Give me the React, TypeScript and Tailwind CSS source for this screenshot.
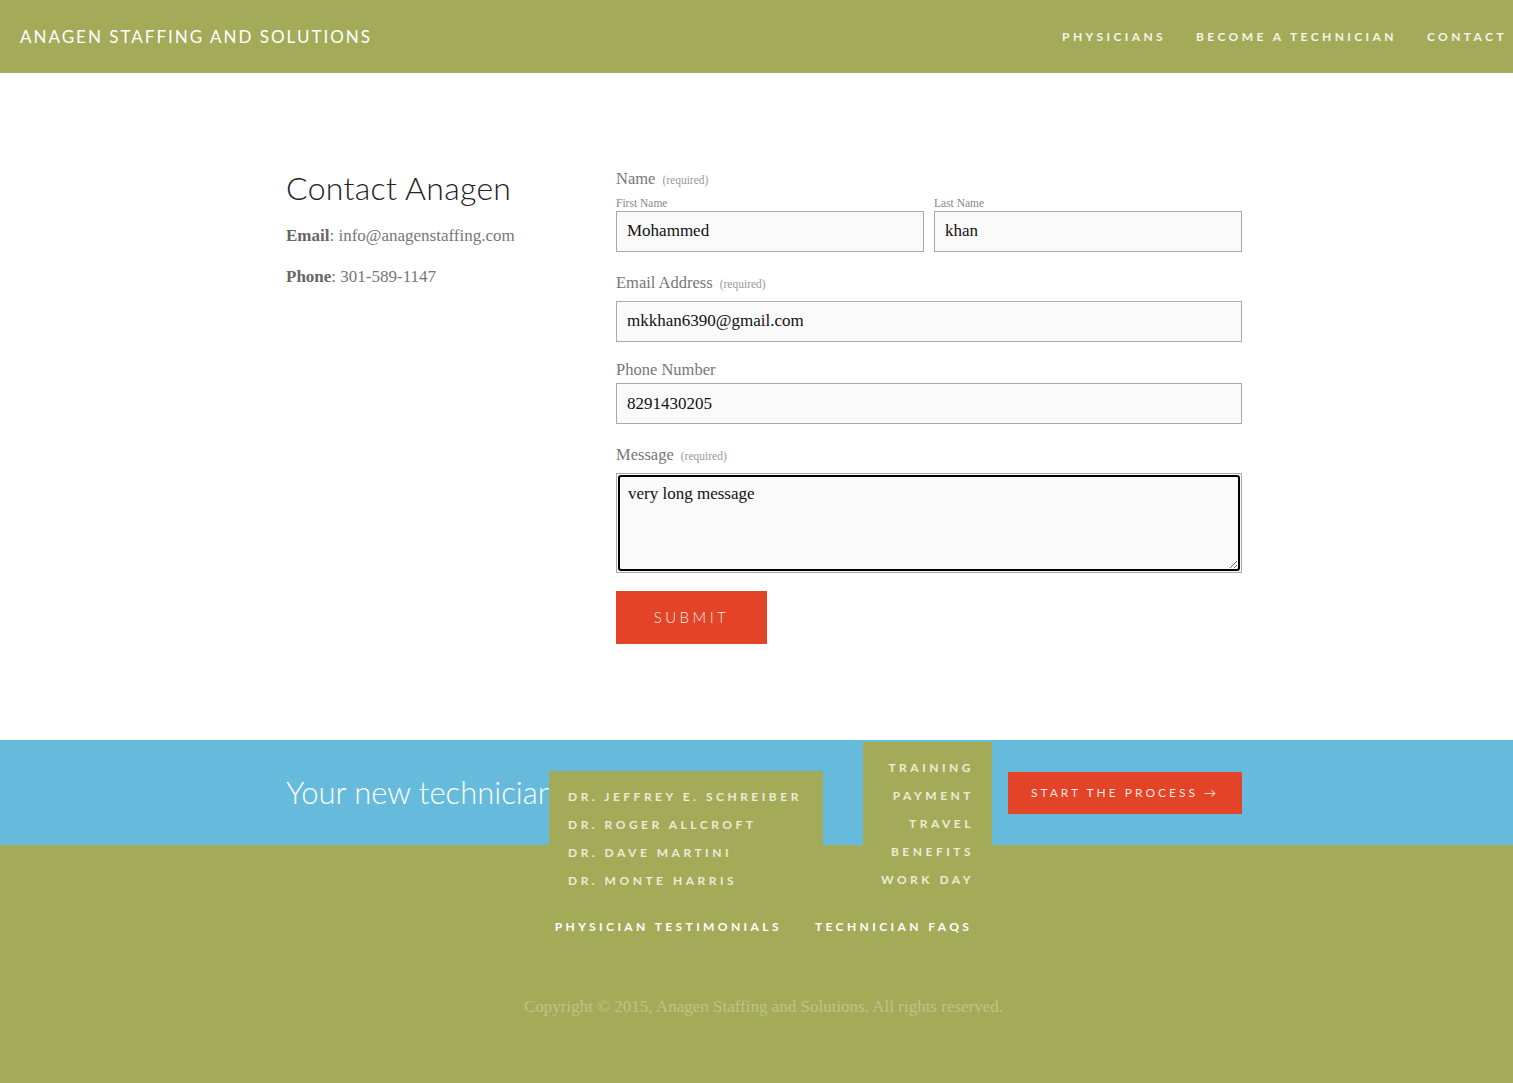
import React from "react";

const SANS = "font-['Lato','Open_Sans',sans-serif]";
const SERIF = "font-['Liberation_Serif','DejaVu_Serif',serif]";

export default function App() {
  return (
    <div className={`min-h-[1083px] w-full bg-white ${SERIF}`}>
      {/* Header */}
      <header className="flex h-[73px] items-center justify-between bg-[#a3ab59] pl-[20px] pr-[6px]">
        <div className={`${SANS} text-[17px] tracking-[2px] text-white`}>ANAGEN STAFFING AND SOLUTIONS</div>
        <nav className={`${SANS} flex gap-[30px] text-[12px] font-bold tracking-[3.4px] text-[#f4f4ea]`}>
          <span>PHYSICIANS</span>
          <span>BECOME A TECHNICIAN</span>
          <span>CONTACT</span>
        </nav>
      </header>

      {/* Main */}
      <main className="flex h-[667px] pl-[286px] pt-[94px]">
        <div className="w-[330px] pt-[1px]">
          <h1 className={`${SANS} text-[32px] font-light leading-[40px] text-[#222] tracking-[0.3px]`}>Contact Anagen</h1>
          <p className="mt-[15px] text-[17px] text-[#777]">
            <b className="font-bold text-[#666]">Email</b>: info@anagenstaffing.com
          </p>
          <p className="mt-[15px] text-[17px] text-[#777]">
            <b className="font-bold text-[#666]">Phone</b>: 301-589-1147
          </p>
        </div>
        <div className="w-[626px]">
          <div className="flex items-baseline gap-[7px] text-[#777]">
            <span className="text-[16.5px]">Name</span>
            <span className="text-[11.5px] text-[#999]">(required)</span>
          </div>
          <div className="mt-[4px] flex gap-[10px]">
            <div className="flex-1">
              <div className="text-[11.5px] leading-[15px] text-[#888]">First Name</div>
              <input
                readOnly
                defaultValue="Mohammed"
                className={`${SERIF} h-[41px] w-full border border-[#aaa] bg-[#fafafa] px-[10px] text-[17px] text-[#111] outline-none`}
              />
            </div>
            <div className="flex-1">
              <div className="text-[11.5px] leading-[15px] text-[#888]">Last Name</div>
              <input
                readOnly
                defaultValue="khan"
                className={`${SERIF} h-[41px] w-full border border-[#aaa] bg-[#fafafa] px-[10px] text-[17px] text-[#111] outline-none`}
              />
            </div>
          </div>

          <div className="mt-[19px] flex items-baseline gap-[7px] text-[#777]">
            <span className="text-[16.5px]">Email Address</span>
            <span className="text-[11.5px] text-[#999]">(required)</span>
          </div>
          <input
            readOnly
            defaultValue="mkkhan6390@gmail.com"
            className={`${SERIF} mt-[5px] h-[41px] w-full border border-[#aaa] bg-[#fafafa] px-[10px] text-[17px] text-[#111] outline-none`}
          />

          <div className="mt-[16px] text-[16.5px] text-[#777]">Phone Number</div>
          <input
            readOnly
            defaultValue="8291430205"
            className={`${SERIF} mt-[1px] h-[41px] w-full border border-[#aaa] bg-[#fafafa] px-[10px] text-[17px] text-[#111] outline-none`}
          />

          <div className="mt-[19px] flex items-baseline gap-[7px] text-[#777]">
            <span className="text-[16.5px]">Message</span>
            <span className="text-[11.5px] text-[#999]">(required)</span>
          </div>
          <div className="mt-[5px] h-[100px] w-full border border-[#aaa] bg-[#fafafa] p-[1px]">
            <textarea
              readOnly
              defaultValue="very long message"
              className={`${SERIF} block h-full w-full resize-y rounded-[3px] border-2 border-black bg-[#fafafa] px-[8px] py-[6px] text-[17px] leading-[22px] text-[#111] outline-none`}
            />
          </div>

          <button
            className={`${SANS} mt-[18px] h-[53px] w-[151px] bg-[#e34326] text-[15px] font-light tracking-[3.5px] text-[#fde9e4]`}
          >
            SUBMIT
          </button>
        </div>
      </main>

      {/* Blue band */}
      <section className="relative h-[105px] bg-[#66bbdc]">
        <div className="flex h-full items-center pl-[286px] pr-[271px]">
          <div className={`${SANS} text-[31px] font-light text-white`}>Your new technician</div>
          <div className="ml-auto">
            <button
              className={`${SANS} flex h-[42px] w-[234px] items-center justify-center bg-[#e34326] text-[12px] tracking-[3px] text-[#fbe6e0]`}
            >
              START THE PROCESS →
            </button>
          </div>
        </div>

        {/* dropdown 1 */}
        <div
          className={`${SANS} absolute left-[549px] top-[31px] z-10 flex w-[274px] flex-col gap-[11px] bg-[#a3ab59] px-[19px] pb-[10px] pt-[17px] text-[12px] font-bold leading-[17px] tracking-[3.5px] text-[#ecebd6]`}
        >
          <span>DR. JEFFREY E. SCHREIBER</span>
          <span>DR. ROGER ALLCROFT</span>
          <span>DR. DAVE MARTINI</span>
          <span>DR. MONTE HARRIS</span>
        </div>

        {/* dropdown 2 */}
        <div
          className={`${SANS} absolute left-[863px] top-[2px] z-10 flex w-[129px] flex-col items-end gap-[11px] bg-[#a3ab59] pb-[10px] pr-[18px] pt-[17px] text-[12px] font-bold leading-[17px] tracking-[3.5px] text-[#ecebd6]`}
        >
          <span>TRAINING</span>
          <span>PAYMENT</span>
          <span>TRAVEL</span>
          <span>BENEFITS</span>
          <span>WORK DAY</span>
        </div>
      </section>

      {/* Footer */}
      <footer className="flex h-[238px] flex-col items-center bg-[#a3ab59]">
        <nav
          className={`${SANS} mt-[73px] flex gap-[33px] pl-[14px] text-[12px] font-bold tracking-[3.4px] text-white`}
        >
          <span>PHYSICIAN TESTIMONIALS</span>
          <span>TECHNICIAN FAQS</span>
        </nav>
        <div className="mt-[58px] pl-[14px] text-[17px] text-[#bec387]">
          Copyright © 2015, Anagen Staffing and Solutions. All rights reserved.
        </div>
      </footer>
    </div>
  );
}
